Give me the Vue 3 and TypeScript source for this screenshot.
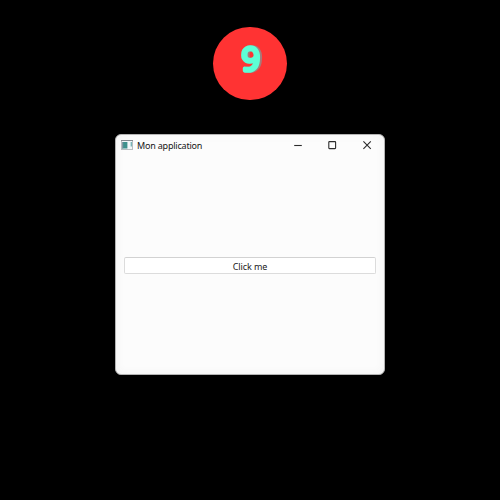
<script setup lang="ts">
import { ref } from 'vue'

const step = ref<number>(9)
const title = ref<string>('Mon application')
</script>

<template>
  <main class="stage">
    <div class="step">
      <svg class="digit" viewBox="0 0 74 74">
        <text x="38" y="44.6" text-anchor="middle">{{ step }}</text>
      </svg>
    </div>
    <section class="window">
      <header class="titlebar">
        <svg class="app-icon" viewBox="0 0 12 10">
          <rect x="0" y="0" width="12" height="10" fill="#b9bdc0" />
          <rect x="0" y="0" width="12" height="1" fill="#858b91" />
          <rect x="1" y="1" width="10" height="8" fill="#f2f6f8" />
          <rect x="1" y="2" width="5.4" height="6.5" fill="#3f918d" />
          <rect x="1" y="2" width="1.2" height="6.5" fill="#8298a4" />
          <rect x="9.7" y="2" width="1.1" height="4.5" fill="#5ba5a8" />
        </svg>
        <h1 class="title">{{ title }}</h1>
        <nav class="controls">
          <button class="control" aria-label="Minimize">
            <svg viewBox="0 0 10 10"><path d="M1.2 5.5H8.8" /></svg>
          </button>
          <button class="control" aria-label="Maximize">
            <svg viewBox="0 0 10 10"><rect x="1.8" y="1.6" width="6.8" height="7" rx="0.6" /></svg>
          </button>
          <button class="control" aria-label="Close">
            <svg viewBox="0 0 10 10"><path d="M1.4 1.4L8.8 8.8M8.8 1.4L1.4 8.8" /></svg>
          </button>
        </nav>
      </header>
      <div class="content">
        <button class="action">Click me</button>
      </div>
    </section>
  </main>
</template>

<style>
body {
  background: #000;
}
</style>

<style scoped>
.stage {
  box-sizing: border-box;
  width: 500px;
  height: 500px;
  padding-top: 26.5px;
  display: flex;
  flex-direction: column;
  align-items: center;
  background: #000;
  overflow: hidden;
}
.step {
  width: 73.5px;
  height: 73.5px;
  border-radius: 50%;
  background: #ff3333;
}
.digit {
  display: block;
  width: 73.5px;
  height: 73.5px;
  filter: drop-shadow(2px 0 0.6px #a87a7a);
}
.digit text {
  font: 400 33px "Noto Sans", sans-serif;
  fill: #5dffd6;
  stroke: #5dffd6;
  stroke-width: 3.6px;
  stroke-linejoin: round;
}
.window {
  box-sizing: border-box;
  width: 270px;
  height: 241px;
  margin-top: 34px;
  border: 1px solid #b4b4b4;
  border-radius: 6px;
  background: #fcfcfc;
  box-shadow: inset 0 0 10px #f3f3f3;
  display: flex;
  flex-direction: column;
}
.titlebar {
  display: flex;
  align-items: center;
  height: 20px;
  padding-left: 5px;
}
.app-icon {
  width: 12px;
  height: 10px;
}
.title {
  flex: 1;
  margin: 0 0 0 4px;
  padding-top: 2px;
  font: 400 9px/20px "Noto Sans", sans-serif;
  letter-spacing: -0.2px;
  color: #161616;
  white-space: nowrap;
}
.controls {
  display: flex;
}
.control {
  width: 34.5px;
  height: 20px;
  padding: 0;
  border: 0;
  background: none;
  display: flex;
  align-items: center;
  justify-content: center;
}
.control svg {
  width: 10px;
  height: 10px;
  fill: none;
  stroke: #2c2c2c;
  stroke-width: 1.1;
}
.content {
  flex: 1;
  padding: 102px 8px 0;
}
.action {
  display: block;
  box-sizing: border-box;
  width: 100%;
  height: 17px;
  padding: 1px 0 0;
  border: 1px solid #dcdcdc;
  border-top-color: #d2d2d2;
  border-radius: 2px;
  background: #fff;
  color: #1b1b1b;
  font: 400 9px/15px "Noto Sans", sans-serif;
  letter-spacing: -0.1px;
  text-align: center;
}
</style>
